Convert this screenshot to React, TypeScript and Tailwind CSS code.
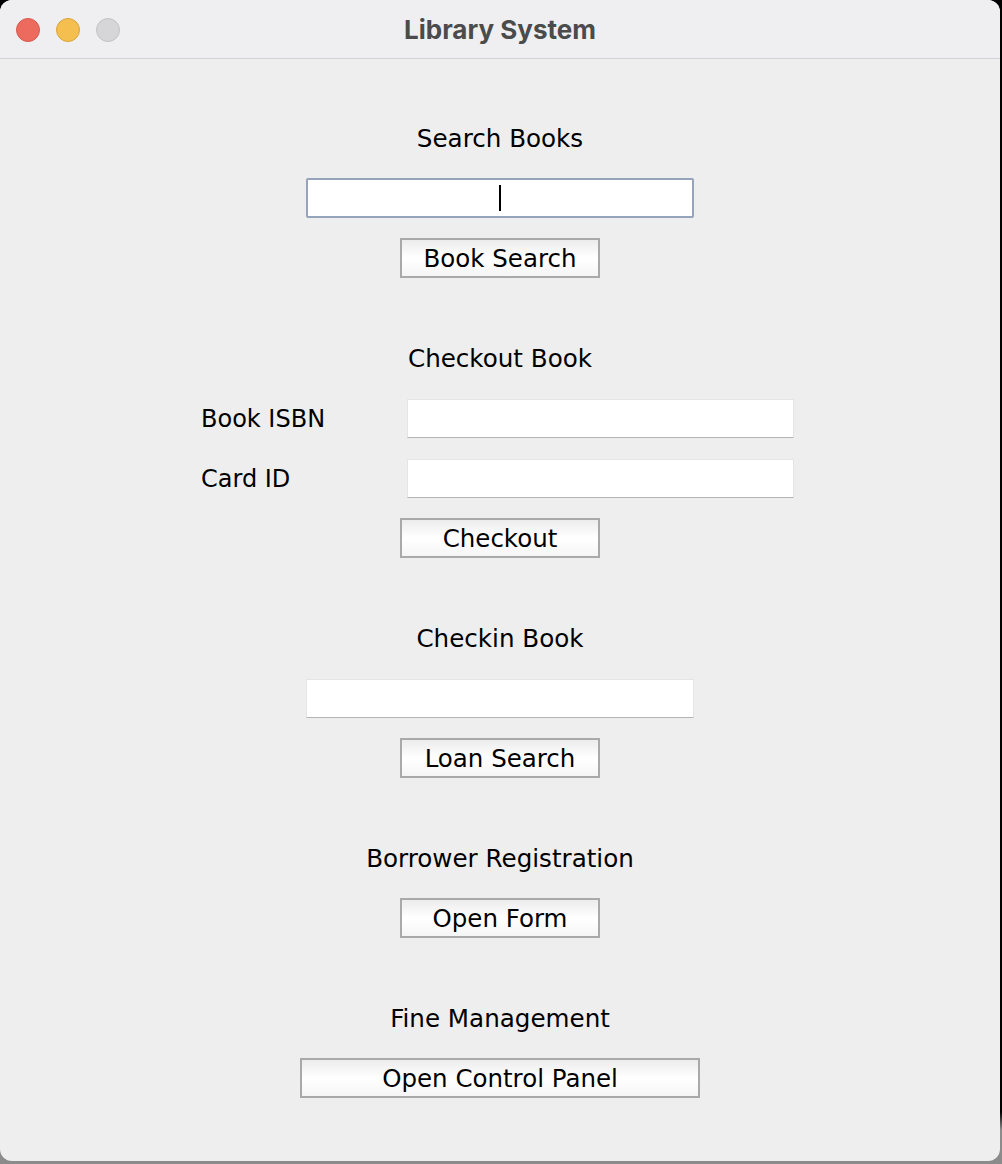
import React from 'react';

const body = { fontFamily: '"DejaVu Sans", "Liberation Sans", sans-serif' };

const Heading = ({ children }: { children: React.ReactNode }) => (
  <div className="h-[40px] flex items-center justify-center text-[24.6px] text-black leading-none pt-[2px]">
    {children}
  </div>
);

const Button = ({ label, wide }: { label: string; wide?: boolean }) => (
  <button
    type="button"
    className={`${wide ? 'w-[400px]' : 'w-[200px]'} h-[40px] border-2 border-[#a9a9a9] bg-gradient-to-b from-[#ececec] via-white to-[#f5f5f5] text-[24.5px] text-black leading-none flex items-center justify-center pt-[3px]`}
  >
    {label}
  </button>
);

const Field = ({ width = 'w-[388px]' }: { width?: string }) => (
  <div className={`${width} h-[39px] bg-white border border-[#e4e4e4] border-b-[#b4b4b4]`} />
);

export default function App() {
  return (
    <div
      className="w-[1002px] h-[1164px] bg-[linear-gradient(to_bottom,#000_0px,#000_1112px,#8b8b8b_1130px,#8b8b8b_1164px)]"
      style={body}
    >
      <div className="w-[1000px] h-[1161px] rounded-[12px] overflow-hidden bg-[#eeeeee] flex flex-col">
        {/* title bar */}
        <div className="h-[59px] shrink-0 bg-[#efeff1] border-b border-[#d2d2d4] relative flex items-center justify-center">
          <div className="absolute left-[16px] top-[18px] flex gap-[16px]">
            <span className="w-[24px] h-[24px] rounded-full bg-[#ed6a5e] border border-[#d65a4f]" />
            <span className="w-[24px] h-[24px] rounded-full bg-[#f5bf4f] border border-[#d9a43f]" />
            <span className="w-[24px] h-[24px] rounded-full bg-[#d6d6d8] border border-[#c3c3c5]" />
          </div>
          <span
            className="text-[26px] font-bold text-[#4b4b4b] leading-none pt-[1px]"
            style={{ fontFamily: 'Inter, "Liberation Sans", sans-serif' }}
          >
            Library System
          </span>
        </div>

        {/* content */}
        <div className="flex flex-col items-center pt-[59px]">
          {/* Search Books */}
          <div className="flex flex-col items-center gap-[20px]">
            <Heading>Search Books</Heading>
            <div className="w-[388px] h-[40px] bg-white border-2 border-[#95a4bb] rounded-[2px] flex items-center justify-center">
              <span className="w-[2px] h-[26px] bg-black" />
            </div>
            <Button label="Book Search" />
          </div>

          {/* Checkout Book */}
          <div className="flex flex-col items-center gap-[20px] mt-[60px] w-full">
            <Heading>Checkout Book</Heading>
            <div className="self-start ml-[201px] flex flex-col gap-[20px]">
              <div className="h-[40px] flex items-center">
                <span className="w-[206px] text-[24px] leading-none pt-[2px]">Book ISBN</span>
                <Field width="w-[387px]" />
              </div>
              <div className="h-[40px] flex items-center">
                <span className="w-[206px] text-[24px] leading-none pt-[2px]">Card ID</span>
                <Field width="w-[387px]" />
              </div>
            </div>
            <Button label="Checkout" />
          </div>

          {/* Checkin Book */}
          <div className="flex flex-col items-center gap-[20px] mt-[60px]">
            <Heading>Checkin Book</Heading>
            <div className="h-[40px] flex items-center">
              <Field />
            </div>
            <Button label="Loan Search" />
          </div>

          {/* Borrower Registration */}
          <div className="flex flex-col items-center gap-[20px] mt-[60px]">
            <Heading>Borrower Registration</Heading>
            <Button label="Open Form" />
          </div>

          {/* Fine Management */}
          <div className="flex flex-col items-center gap-[20px] mt-[60px]">
            <Heading>Fine Management</Heading>
            <Button label="Open Control Panel" wide />
          </div>
        </div>
      </div>
    </div>
  );
}
